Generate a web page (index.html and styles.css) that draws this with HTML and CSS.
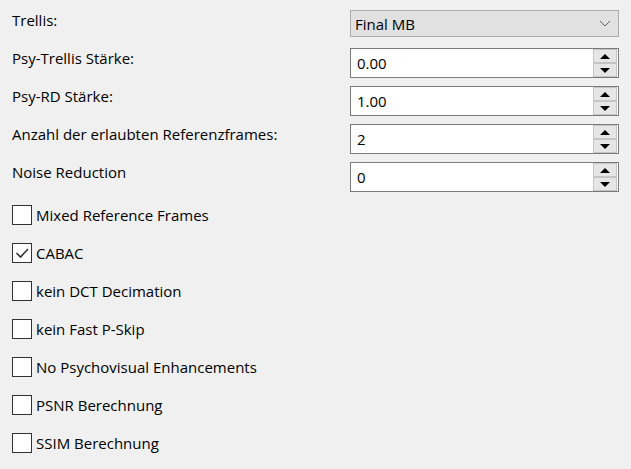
FILE: index.html
```html
<!DOCTYPE html>
<html>
<head>
<meta charset="utf-8">
<link rel="stylesheet" href="styles.css">
</head>
<body>
<div class="page">
  <div class="form">
    <div class="row row-combo">
      <div class="label">Trellis:</div>
      <div class="combo"><span class="combo-text">Final MB</span>
        <svg class="chev" width="12" height="7" viewBox="0 0 12 7"><path d="M1 1 L6 6 L11 1" fill="none" stroke="#606060" stroke-width="1"/></svg>
      </div>
    </div>
    <div class="row">
      <div class="label">Psy-Trellis Stärke:</div>
      <div class="spin"><span class="spin-text">0.00</span>
        <div class="btns"><div class="btn"><span class="up"></span></div><div class="btn"><span class="down"></span></div></div>
      </div>
    </div>
    <div class="row">
      <div class="label">Psy-RD Stärke:</div>
      <div class="spin"><span class="spin-text">1.00</span>
        <div class="btns"><div class="btn"><span class="up"></span></div><div class="btn"><span class="down"></span></div></div>
      </div>
    </div>
    <div class="row">
      <div class="label">Anzahl der erlaubten Referenzframes:</div>
      <div class="spin"><span class="spin-text">2</span>
        <div class="btns"><div class="btn"><span class="up"></span></div><div class="btn"><span class="down"></span></div></div>
      </div>
    </div>
    <div class="row">
      <div class="label">Noise Reduction</div>
      <div class="spin"><span class="spin-text">0</span>
        <div class="btns"><div class="btn"><span class="up"></span></div><div class="btn"><span class="down"></span></div></div>
      </div>
    </div>
  </div>
  <div class="checks">
    <div class="check"><span class="box"></span><span>Mixed Reference Frames</span></div>
    <div class="check"><span class="box"><svg width="18" height="18" viewBox="0 0 18 18"><path d="M3.5 9 L7.5 13 L15 5" fill="none" stroke="#333" stroke-width="1.6"/></svg></span><span>CABAC</span></div>
    <div class="check"><span class="box"></span><span>kein DCT Decimation</span></div>
    <div class="check"><span class="box"></span><span>kein Fast P-Skip</span></div>
    <div class="check"><span class="box"></span><span>No Psychovisual Enhancements</span></div>
    <div class="check"><span class="box"></span><span>PSNR Berechnung</span></div>
    <div class="check"><span class="box"></span><span>SSIM Berechnung</span></div>
  </div>
</div>
</body>
</html>
```
FILE: styles.css
```css
html, body {
  margin: 0;
  padding: 0;
  background: #f0f0f0;
}
.page {
  width: 631px;
  height: 469px;
  box-sizing: border-box;
  padding: 10px 12px 0 12px;
  font-family: "Open Sans", "Noto Sans", sans-serif;
  font-size: 15px;
  color: #000;
}
.form {
  display: flex;
  flex-direction: column;
  gap: 8px;
}
.row {
  display: flex;
  align-items: flex-start;
  justify-content: space-between;
}
.row-combo {
  margin-bottom: 3px;
}
.label {
  line-height: 20px;
}
.combo {
  width: 269px;
  height: 27px;
  box-sizing: border-box;
  border: 1px solid #adadad;
  background: #e1e1e1;
  display: flex;
  align-items: center;
  justify-content: space-between;
  padding: 0 7px 0 4px;
}
.combo-text {
  line-height: 20px;
}
.spin {
  width: 269px;
  height: 30px;
  box-sizing: border-box;
  border: 1px solid #7a7a7a;
  background: #fff;
  display: flex;
  align-items: center;
  justify-content: space-between;
  padding: 0 1px 0 6px;
}
.spin-text {
  line-height: 20px;
}
.btns {
  width: 24px;
  height: 28px;
  display: flex;
  flex-direction: column;
}
.btn {
  flex: 1;
  box-sizing: border-box;
  border: 1px solid #c4c4c4;
  background: #e6e6e6;
  display: flex;
  align-items: center;
  justify-content: center;
}
.up {
  width: 0;
  height: 0;
  border-left: 5px solid transparent;
  border-right: 5px solid transparent;
  border-bottom: 5px solid #000;
}
.down {
  width: 0;
  height: 0;
  border-left: 5px solid transparent;
  border-right: 5px solid transparent;
  border-top: 5px solid #000;
}
.checks {
  margin-top: 13px;
  display: flex;
  flex-direction: column;
  gap: 18px;
}
.check {
  display: flex;
  align-items: center;
  gap: 4px;
  height: 20px;
  line-height: 20px;
}
.box {
  width: 20px;
  height: 20px;
  box-sizing: border-box;
  border: 1px solid #333;
  background: #fff;
  display: flex;
  align-items: center;
  justify-content: center;
}
.box svg {
  display: block;
}
```
